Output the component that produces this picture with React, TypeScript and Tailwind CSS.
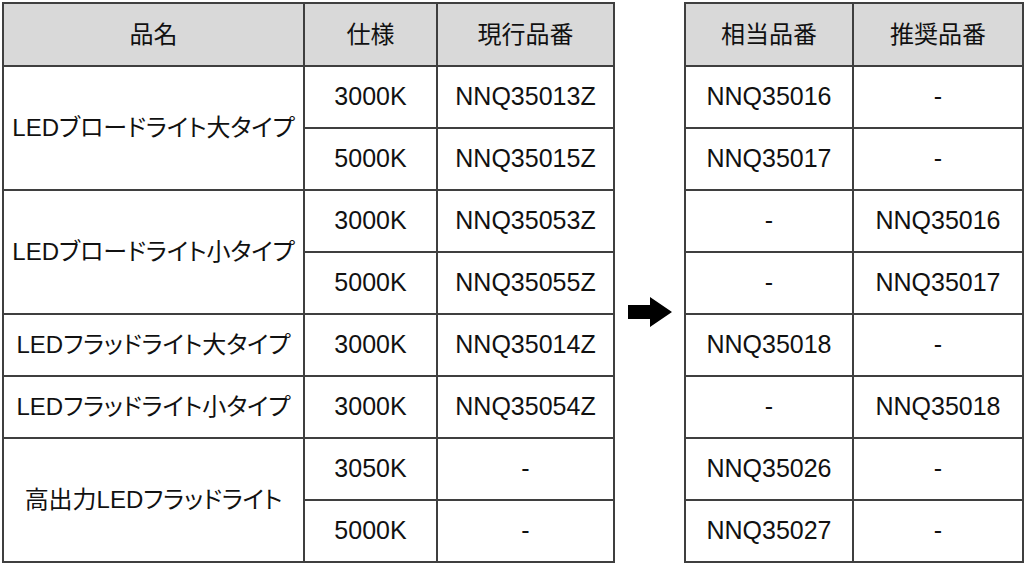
const font = {
  fontFamily: '"Liberation Sans", "Noto Sans CJK JP", sans-serif',
};

type Row = { spec: string; current: string; equiv: string; rec: string };

const groups: { name: string; rows: Row[] }[] = [
  {
    name: "LEDブロードライト大タイプ",
    rows: [
      { spec: "3000K", current: "NNQ35013Z", equiv: "NNQ35016", rec: "-" },
      { spec: "5000K", current: "NNQ35015Z", equiv: "NNQ35017", rec: "-" },
    ],
  },
  {
    name: "LEDブロードライト小タイプ",
    rows: [
      { spec: "3000K", current: "NNQ35053Z", equiv: "-", rec: "NNQ35016" },
      { spec: "5000K", current: "NNQ35055Z", equiv: "-", rec: "NNQ35017" },
    ],
  },
  {
    name: "LEDフラッドライト大タイプ",
    rows: [{ spec: "3000K", current: "NNQ35014Z", equiv: "NNQ35018", rec: "-" }],
  },
  {
    name: "LEDフラッドライト小タイプ",
    rows: [{ spec: "3000K", current: "NNQ35054Z", equiv: "-", rec: "NNQ35018" }],
  },
  {
    name: "高出力LEDフラッドライト",
    rows: [
      { spec: "3050K", current: "-", equiv: "NNQ35026", rec: "-" },
      { spec: "5000K", current: "-", equiv: "NNQ35027", rec: "-" },
    ],
  },
];

const allRows = groups.flatMap((g) => g.rows);

const th =
  "border-2 border-[#3f3f3f] bg-[#d9d9d9] font-normal text-[24px] text-center align-middle";
const td = "border-2 border-[#3f3f3f] text-center align-middle";

export default function App() {
  return (
    <div
      className="w-[1024px] h-[564px] bg-white text-[#111] text-[25px] flex items-start pl-[2px] pt-[2px]"
      style={font}
    >
      {/* current products */}
      <table className="table-fixed border-collapse w-[611px]">
        <colgroup>
          <col className="w-[301px]" />
          <col className="w-[133px]" />
          <col className="w-[177px]" />
        </colgroup>
        <thead>
          <tr className="h-[63px]">
            <th className={th}>品名</th>
            <th className={th}>仕様</th>
            <th className={th}>現行品番</th>
          </tr>
        </thead>
        <tbody>
          {groups.map((g) =>
            g.rows.map((r, i) => (
              <tr key={g.name + i} className="h-[62px]">
                {i === 0 && (
                  <td
                    rowSpan={g.rows.length}
                    className={td + " text-[24px] [font-feature-settings:'palt']"}
                  >
                    {g.name}
                  </td>
                )}
                <td className={td}>{r.spec}</td>
                <td className={td}>{r.current}</td>
              </tr>
            )),
          )}
        </tbody>
      </table>

      {/* arrow */}
      <div className="w-[71px] flex justify-center pt-[295px]">
        <svg width="44" height="30" viewBox="0 0 44 30">
          <polygon points="0,8 22,8 22,0 44,15 22,30 22,22 0,22" fill="#000" />
        </svg>
      </div>

      {/* replacement products */}
      <table className="table-fixed border-collapse w-[338px]">
        <colgroup>
          <col className="w-[168px]" />
          <col className="w-[170px]" />
        </colgroup>
        <thead>
          <tr className="h-[63px]">
            <th className={th}>相当品番</th>
            <th className={th}>推奨品番</th>
          </tr>
        </thead>
        <tbody>
          {allRows.map((r, i) => (
            <tr key={i} className="h-[62px]">
              <td className={td}>{r.equiv}</td>
              <td className={td}>{r.rec}</td>
            </tr>
          ))}
        </tbody>
      </table>
    </div>
  );
}
